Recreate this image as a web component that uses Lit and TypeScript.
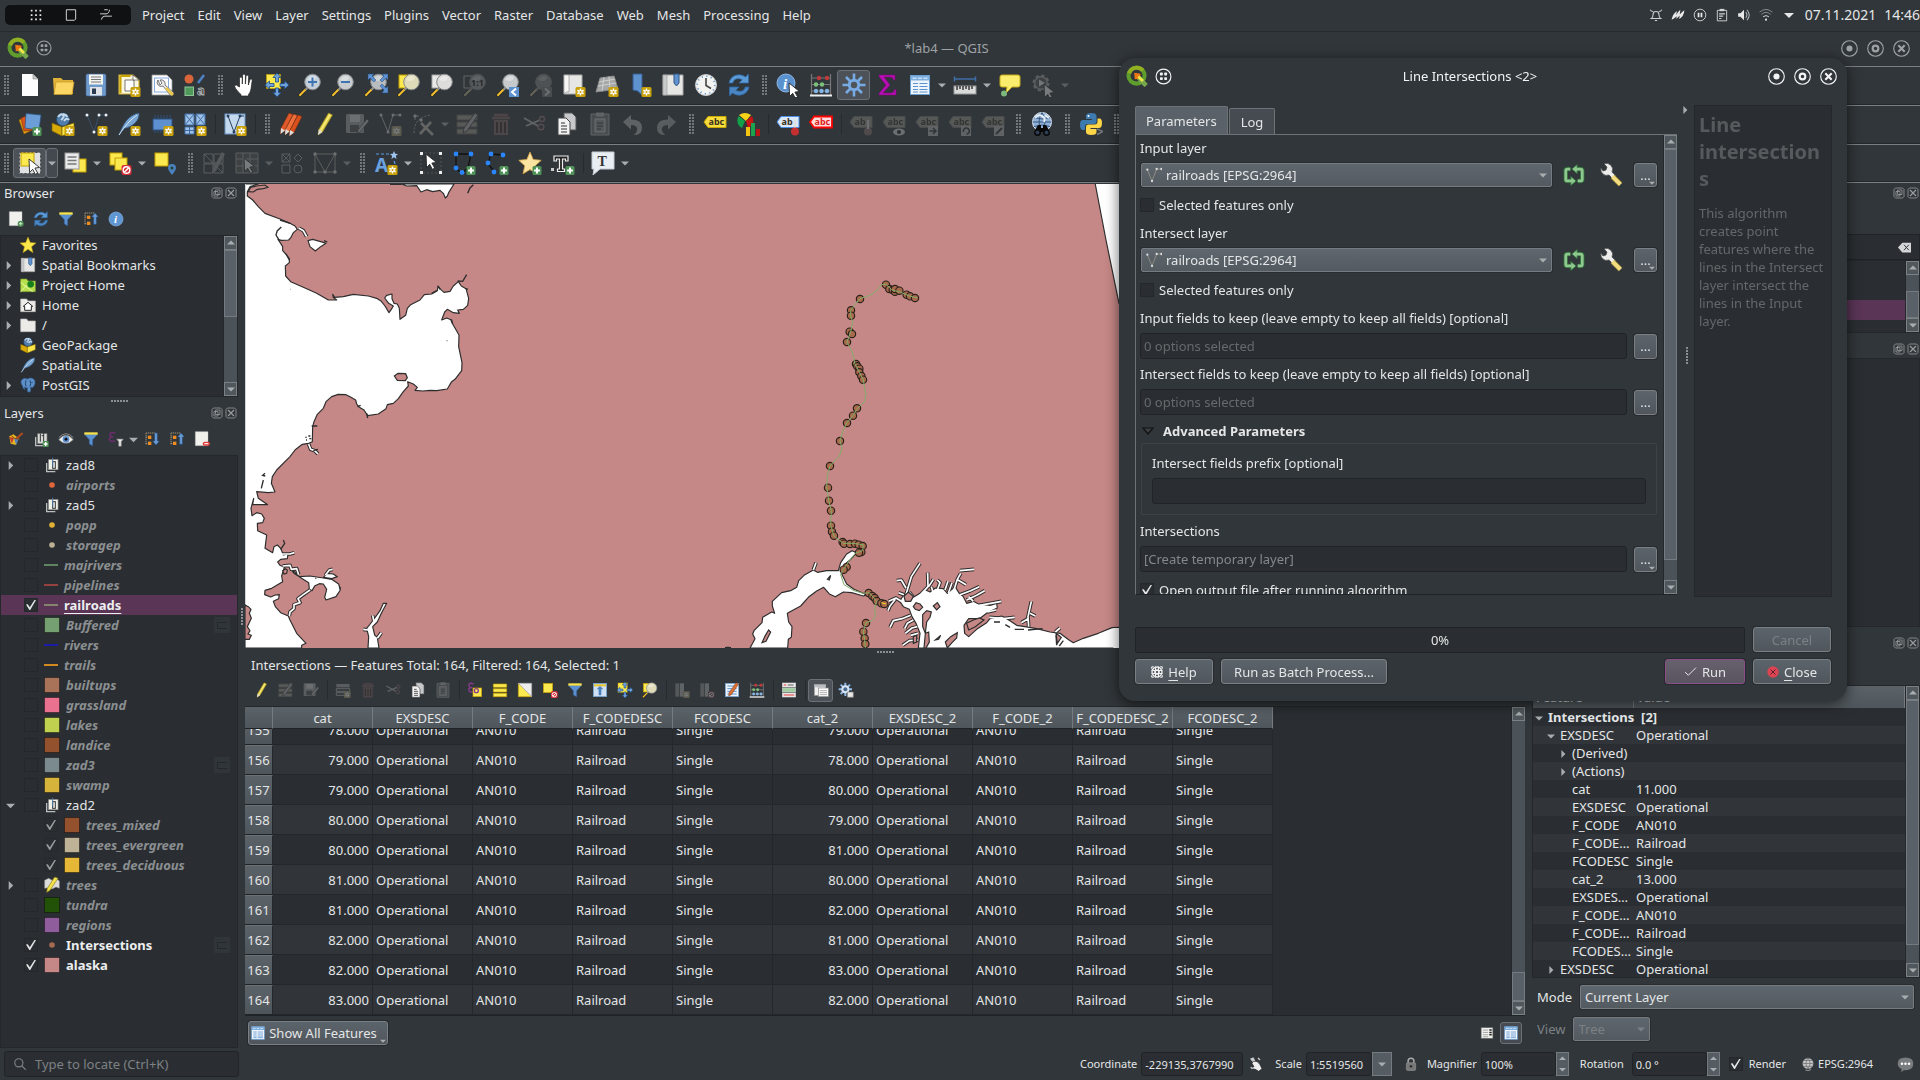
import { LitElement, html, svg, css, nothing } from "lit";
import { customElement } from "lit/decorators.js";
import { classMap } from "lit/directives/class-map.js";

/* ------------------------------------------------------------------ icons */

const star = svg`<rect x="13.500" y="14" width="10" height="10" rx="1.500" fill="#c8a008"/><path d="M18.500 15.500v7M15.400 17.200l6.200 3.600M21.600 17.200l-6.200 3.600" stroke="#fff" stroke-width="1.600"/><circle cx="18.500" cy="19" r="1" fill="#c8a008"/>`;
const plus = svg`<rect x="14.500" y="15" width="9" height="9" rx="1.500" fill="#4f9257"/><path d="M19 16.600v5.800M16.100 19.500h5.800" stroke="#fff" stroke-width="2"/>`;
const forbid = svg`<rect x="13.500" y="14" width="10" height="10" rx="2" fill="#d83038"/><circle cx="18.500" cy="19" r="3.300" fill="none" stroke="#fff" stroke-width="1.400"/><path d="M16.300 21.200l4.400-4.400" stroke="#fff" stroke-width="1.400"/>`;
const cursor = (x: number, y: number) => svg`<path transform="translate(${x} ${y})" d="M0 0l10.500 8.500-4.600.6 2.800 5-2.300 1.300-2.700-5.100L0.600 13.600z" fill="#fff" stroke="#222" stroke-width=".9"/>`;
const glass = (fill: string) => svg`<path d="M10 14L6.500 18" stroke="#8f9396" stroke-width="2.200"/><path d="M7.500 16.500L1 23.200" stroke="#1c1c1c" stroke-width="3"/><path d="M7.500 16.500L1.400 22.800" stroke="#f4c030" stroke-width="2"/><circle cx="14.500" cy="9" r="7.800" fill="${fill}" stroke="#85898c"/><path d="M9 7a6 6 0 0 1 9-3q-1 6-9 3z" fill="#fff" opacity=".35"/>`;
const tag = (fill: string, line: string, txt: string) => svg`<path d="M1 10L5 4.500h18v11H5z" fill="${fill}" stroke="${line}"/><text x="5.500" y="13.200" font-size="9" font-weight="700" font-family="Noto Sans" fill="#3a3020">${txt}</text>`;
const yellowSq = (x: number, y: number, s: number) => svg`<rect x="${x}" y="${y}" width="${s}" height="${s}" fill="#fce94f" stroke="#c4a000"/>`;
const pencil = svg`<path d="M16.500 1l4 2L10.500 20 6 23l.8-5.500z" fill="#e8d44a" stroke="#8d7c1c" stroke-width=".7"/><path d="M18 2.500L8.400 19" stroke="#fff6a0"/><path d="M6.800 17.500L6 23l4.500-3z" fill="#ddd"/>`;
const tableIco = svg`<rect x="2.500" y="2.500" width="19" height="19" fill="#eef4fa" stroke="#6a9fd4"/><rect x="3" y="3" width="18" height="4.500" fill="#7fb0e0"/><path d="M4.500 5.200h4M10 5.200h4M15.500 5.200h4" stroke="#e8f2fc"/><path d="M5 10.500h5M11.500 10.500h8M5 13.500h5M11.500 13.500h8M5 16.500h5M11.500 16.500h8M5 19h5M11.500 19h8" stroke="#5b93cf" stroke-width="1.200"/>`;
const page = svg`<path d="M2 1h19v21H2z" fill="#f0f0ec" stroke="#bbb" stroke-width=".6"/>`;
const refresh = svg`<path d="M2 10C3 3 12-1 18.500 4L21.500 1v9h-9.500l3.200-3.200C11 4.500 6.500 6 5.800 10z" fill="#5b9ad6" stroke="#2f67a3" stroke-width=".8"/><path d="M22 14c-1 7-10 11-16.500 6L2.500 23v-9H12l-3.200 3.200c4.200 2.300 8.700.8 9.400-3.200z" fill="#4a85c4" stroke="#2f67a3" stroke-width=".8"/>`;
const funnel = svg`<path d="M2 5h20l-7.500 8v9l-5-2.500V13z" fill="#5a8fd0" stroke="#33609a" stroke-width=".8"/><rect x="2" y="2" width="20" height="3.500" fill="#f8e34a"/>`;
const globeBox = svg`<circle cx="12" cy="7.500" r="6.500" fill="#4f7cab" stroke="#26486c" stroke-width=".7"/><path d="M7 5q3-4 5-2t-2 5M13 9q3-4 5-1M12 2q4 1 4 3" stroke="#c5d8ea" stroke-width="2" fill="none"/><path d="M1 11l10 4v9L1 19z" fill="#d8ab08" stroke="#7d6304" stroke-width=".7"/><path d="M23 11l-12 4v9l12-5z" fill="#fbe548" stroke="#7d6304" stroke-width=".7"/>`;
const feather = svg`<path d="M2 23C6 12 11 3 22 1c1 7-6 14-15 15.500z" fill="#79a5d3" stroke="#31537a" stroke-width=".8"/><path d="M2 23C8 14 13 8 20 3" stroke="#d8e7f5" fill="none"/>`;
const nodes = (c: string, d: string) => svg`<path d="M3 3L10 20 15 3h7" fill="none" stroke="${c}"/><circle cx="3" cy="3" r="1.500" fill="${d}"/><circle cx="10" cy="20" r="1.500" fill="${d}"/><circle cx="15" cy="3" r="1.500" fill="${d}"/><circle cx="22" cy="3" r="1.500" fill="${d}"/>`;
const abacus = svg`<path d="M2.500 1v21M21.500 1v21M2 5h20M2 11.500h20M2 18h20" stroke="#777" stroke-width="1.200"/><path d="M1 22.500h22" stroke="#eee" stroke-width="2"/><g fill="#c03a3a"><circle cx="10" cy="5" r="2.200"/><circle cx="18" cy="5" r="2.200"/></g><g fill="#7cc07c"><circle cx="7" cy="11.500" r="2.200"/><circle cx="13" cy="11.500" r="2.200"/></g><g fill="#84b4e4"><circle cx="7" cy="18" r="2.200"/><circle cx="12.500" cy="18" r="2.200"/><circle cx="18" cy="18" r="2.200"/></g>`;
const treeLines = svg`<path d="M3 3v18M3 3h14M3 9h4M3 19h4" stroke="#b0a080" stroke-width="1.300" fill="none" stroke-dasharray="2 1"/><rect x="6" y="7" width="5" height="5" fill="#f08c1e"/><rect x="6" y="16" width="5" height="5" fill="#f08c1e"/>`;
const copyI = svg`<path d="M9 1h8l4 4v13H9z" fill="#c6c8c9" stroke="#555"/><path d="M3 6h8l4 4v13H3z" fill="#f2f2f2" stroke="#444"/><path d="M6 11h4M6 14h6M6 17h6M6 20h6" stroke="#333" stroke-width="1.200"/>`;
const pasteI = svg`<path d="M3 2h18v21H3z" fill="#777" stroke="#bbb"/><path d="M8 .500h8v4H8z" fill="#bbb"/><path d="M7 7h10v13H7z" fill="#999" stroke="#ddd"/><path d="M9 11h6M9 14h6M9 17h4" stroke="#333"/>`;
const cutI = svg`<path d="M2 6l14 8M4 14L18 8" stroke="#bbb" stroke-width="1.800"/><circle cx="19" cy="15" r="2.800" fill="none" stroke="#c66" stroke-width="1.500"/><circle cx="20" cy="7" r="2.500" fill="none" stroke="#c66" stroke-width="1.500"/>`;
const bin = svg`<path d="M3 6h18M5 3h14" stroke="#c05050" stroke-width="2.500"/><path d="M5 8h14v15H5z" fill="#b85656"/><path d="M8 10v11M12 10v11M16 10v11" stroke="#300" stroke-width="1.300"/>`;
const editRows = svg`<path d="M1 3h20v5H1zM1 10h20v5H1zM1 17h20v5H1z" fill="#a59f6c" stroke="#6b673e"/><path d="M19 1l3 2-11 16-4 2 1-5z" fill="#bbb" stroke="#444"/>`;
const saveEdit = svg`<rect x="1" y="2" width="18" height="19" rx="1.500" fill="#aaa"/><rect x="5" y="3" width="10" height="7" fill="#ddd"/><rect x="5" y="13" width="9" height="7" fill="#555"/><path d="M22 7l2 2-9 11-3 1 1-3z" fill="#ccc" stroke="#333" stroke-width=".6"/>`;
const arrowsX = svg`<path d="M12 0l4 4.500h-2.500V9h-3V4.500H8zM12 24l4-4.500h-2.500V15h-3v4.500H8zM0 12l4.500-4v2.500H9v3H4.500V16zM24 12l-4.500-4v2.500H15v3h4.500V16z" fill="#6fa2dc" stroke="#1d4a80" stroke-width=".8"/>`;
const bar = (r: string, x: number) => svg`<rect x="${x}" y="2" width="6" height="20" fill="${r}"/>`;

const ICONS: Record<string, unknown> = {
  New: svg`<path d="M4 1h11l5 5v17H4z" fill="#fdfdfd"/><path d="M15 1v5h5z" fill="#c9cbcc" stroke="#777" stroke-width=".5"/>`,
  Open: svg`<path d="M2 5h8l2 2h10v14H3z" fill="#e0b238"/><path d="M5 9h18l-2 12.500H3z" fill="#fbd663" stroke="#c99a24" stroke-width=".7"/>`,
  Save: svg`<rect x="2" y="1" width="20" height="22" rx="1.500" fill="#6f9bcc" stroke="#3f6794" stroke-width=".6"/><rect x="5" y="1.500" width="14" height="10" fill="#f3f3f1"/><path d="M7 4h10M7 6.500h10M7 9h10" stroke="#777"/><rect x="6" y="14" width="12" height="8.500" fill="#e0e4e8"/><rect x="8" y="15.500" width="4" height="5.500" fill="#2c3c50"/>`,
  "New layout": svg`<path d="M2 2h14l6 5v14H2z" fill="#fbf6de" stroke="#d0b030" stroke-width="1.200"/><path d="M3.500 3v17M3.500 3h10" stroke="#c9a400" stroke-width="2"/><path d="M8 7h9v11H8z" fill="#fff" stroke="#555" stroke-width=".8"/><path d="M16 2l6 5h-6z" fill="#fff" stroke="#333" stroke-width=".6"/>${star}`,
  "Layout manager": svg`<path d="M2 2h15l5 5v15H2z" fill="#fdfdfd" stroke="#999" stroke-width=".8"/><rect x="4.500" y="5" width="14" height="14" fill="none" stroke="#88aadd"/><path d="M8 7a4 4 0 0 0 5 6l8 10 3-3-9-8a4 4 0 0 0-5-5l2 3-2 2z" fill="#ececec" stroke="#444" stroke-width=".7"/><path d="M16 15l7 7" stroke="#e8c64a" stroke-width="3"/>`,
  Styles: svg`<circle cx="6" cy="6" r="4.500" fill="#d9663a"/><path d="M15 10l6-8" stroke="#4f82c4" stroke-width="2.500"/><rect x="2" y="14" width="8.500" height="8.500" fill="#4f9a5b" stroke="#8fc498"/><text x="14" y="22" font-size="13" font-weight="700" font-family="Noto Sans" fill="#303030" stroke="#b8bcbe" stroke-width=".8">a</text>`,
  Pan: svg`<path d="M7.500 14V5.500q0-1.500 1.400-1.500t1.400 1.500V11L10.600 2.500Q10.700 1 12 1t1.400 1.500V11l.6-7.500q.1-1.300 1.300-1.300t1.300 1.400L16.400 12l1.400-5q.4-1.200 1.500-.9t.9 1.500L19 16q-.7 4-2.500 5.500v1.500H9v-1.500Q6 19 3.600 15.500q-1.600-2.500-.3-3.200t2.300.6z" fill="#fff" stroke="#222" stroke-width=".7"/>`,
  "Pan to selection": svg`<rect x="1.500" y="1.500" width="14" height="14" fill="#fce94f" stroke="#c4a000" stroke-dasharray="2 1"/>${arrowsX}`,
  "Zoom in": svg`${glass("#c4cfda")}<path d="M14.500 4.500v9M10 9h9" stroke="#3f74b4" stroke-width="2"/>`,
  "Zoom out": svg`${glass("#c8ccce")}<path d="M10 9h9" stroke="#3f74b4" stroke-width="2"/>`,
  "Zoom full": svg`${glass("#b9bcbe")}<path d="M4 1h6L8 3l4 4-2 2-4-4-2 2zM24 1h-6l2 2-4 4 2 2 4-4 2 2zM24 20v-7l-2 2-4-4-2 2 4 4-2 3z" fill="#5d90cf" stroke="#1d4a80" stroke-width=".5"/>`,
  "Zoom to selection": svg`<rect x="2" y="2" width="11" height="13" fill="#fce94f" stroke="#c4a000"/>${glass("#dfdbb8")}`,
  "Zoom to layer": svg`<rect x="2" y="2" width="11" height="13" fill="#e8e8e6" stroke="#aaa"/>${glass("#dddddb")}`,
  "Zoom native": svg`<rect x="1" y="3" width="12" height="12" fill="none" stroke="#bbb"/>${glass("#999")}<text x="8" y="12.500" font-size="9" font-weight="700" font-family="Noto Sans" fill="#111">1:1</text>`,
  "Zoom last": svg`${glass("#c6cacc")}<rect x="13" y="14" width="10" height="10" fill="#5d90cf"/><path d="M20 15.500L16 19l4 3.500" fill="none" stroke="#fff" stroke-width="2"/>`,
  "Zoom next": svg`${glass("#888")}<rect x="13" y="14" width="10" height="10" fill="#777"/><path d="M16 15.500l4 3.500-4 3.500" fill="none" stroke="#ddd" stroke-width="2"/>`,
  "New map view": svg`<path d="M2 2h18v19H2z" fill="#e6e6e4" stroke="#aaa"/><path d="M2 2h5v17q-3-1-5 2z" fill="#f7f7f5" stroke="#888" stroke-width=".6"/>${star}`,
  "New 3D view": svg`<path d="M5 5l14-2 4 13L1 19z" fill="#a5a7a8" stroke="#888"/><path d="M4 9l16-3M3 13l18-3M9 4L7 18M14 3.500l1 14" stroke="#d8d8d6" stroke-width=".8"/>${star}`,
  "New bookmark": svg`<path d="M5 1h9v21l-4.500-4L5 17z" fill="#5e93cf" stroke="#345f96"/>${star}`,
  Bookmarks: svg`<path d="M2 2h20v20H2z" fill="#e6e6e4" stroke="#aaa"/><path d="M2 2h4v20H2z" fill="#c9cacb" stroke="#999" stroke-width=".6"/><path d="M13 1h5v9l-2.500 3L13 10z" fill="#5e93cf" stroke="#2f5586"/>`,
  Temporal: svg`<circle cx="12" cy="12" r="10.500" fill="#f3f3f1" stroke="#c7c9ca"/><circle cx="12" cy="12" r="8.800" fill="none" stroke="#5e93cf" stroke-width="1.500" stroke-dasharray="1.200 3.400"/><path d="M12 5v7.500l5 3" fill="none" stroke="#444" stroke-width="1.600"/>`,
  Refresh: refresh,
  Identify: svg`<circle cx="10" cy="10" r="9" fill="#5a91cf" stroke="#8fb6e2"/><text x="7" y="15.500" font-size="15" font-weight="700" font-style="italic" font-family="Liberation Serif" fill="#fff">i</text>${cursor(13, 10)}`,
  Calculator: abacus,
  Toolbox: svg`<g stroke="#78aae4" stroke-width="2.600"><path d="M12 .500v23M.500 12h23M4 4l16 16M20 4L4 20"/></g><circle cx="12" cy="12" r="6.200" fill="#78aae4"/><circle cx="12" cy="12" r="3.200" fill="#4f5459"/>`,
  Statistics: svg`<path d="M4 2h16v5h-1.500Q18 4 15 4H9l6 8-7 8h8q3 0 3.500-3.500H21V22H4v-1.500L11 12 4 3.500z" fill="#b80fb4" stroke="#7d077a" stroke-width=".6"/>`,
  "Attribute table": tableIco,
  Measure: svg`<path d="M1 6h22M1.500 3.500v5M22.500 3.500v5" stroke="#3f6ea8" stroke-width="1.500"/><rect x="1" y="13" width="22" height="8" fill="#d9dbda" stroke="#999"/><path d="M4 13v4M7 13v3M10 13v4M13 13v3M16 13v4M19 13v3" stroke="#222" stroke-width="1.300"/>`,
  "Map tips": svg`<path d="M4 2h16q2 0 2 2v8q0 2-2 2h-6l-6 6 1-6H4q-2 0-2-2V4q0-2 2-2z" fill="#faec6c" stroke="#c8ad1c"/><circle cx="6" cy="20.500" r="3" fill="#7cb87c"/>`,
  "Run action": svg`<circle cx="10" cy="10" r="7" fill="#aaa" stroke="#aaa" stroke-width="3" stroke-dasharray="3 2.500"/><circle cx="10" cy="10" r="5.500" fill="#555"/><path d="M8 6.500l6 3.500-6 3.500z" fill="#eee"/>${cursor(13, 11)}`,

  "Data source": svg`<path d="M1 8l8-4 5 14-8 4z" fill="#e8a317" stroke="#8a5c00" stroke-width=".6"/><path d="M3 6l8-3 4 15-9 1z" fill="#d9541e" stroke="#7c2a08" stroke-width=".6"/><path d="M8 1.500L23 3l-2 15-14-2z" fill="#6b9ed6" stroke="#2a5384" stroke-width=".7"/>${plus}`,
  "New GeoPackage": svg`${globeBox}${star}`,
  "New shapefile": svg`${nodes("#39506a", "#e8f0f8")}${star}`,
  "New SpatiaLite": svg`${feather}${star}`,
  "New memory layer": svg`<path d="M5 3v18M8 3v18M11 3v18M14 3v18M17 3v18M20 3v18" stroke="#2f5180"/><rect x="3" y="7" width="19" height="11" fill="#5d90cf" stroke="#2f5180"/>${star}`,
  "New mesh": svg`<path d="M2 2h9v11H2zM13 2h9v11h-9zM2 15h9v7H2z" fill="#9fc2e8" stroke="#4472a8"/><path d="M2 2l9 11M11 2L2 13M13 2l9 11M22 2l-9 11M2 18.500h9M6.500 15v7" stroke="#3c6aa4"/>${star}`,
  "New virtual layer": svg`<rect x="2" y="2" width="20" height="20" fill="#c4d8ee" stroke="#6b94c4"/><path d="M5 4l6 16L17 4h4" fill="none" stroke="#26415f"/><circle cx="5" cy="4" r="1.500" fill="#26415f"/><circle cx="17" cy="4" r="1.500" fill="#26415f"/><circle cx="11" cy="20" r="1.500" fill="#26415f"/>${star}`,
  "Current edits": svg`<g stroke="#6e2c0c" stroke-width=".6"><path d="M10 1l4 1.500-8 16-4.500 3.500.5-6z" fill="#e0592a"/><path d="M14.500 2l4 1.500-8 16L6 23l.5-6z" fill="#ee6f3c"/><path d="M19 3l4 1.500-8 16L10.500 24l.5-6z" fill="#d9501f"/></g><path d="M2 16l-.5 6 4.500-3.500zM6.500 17L6 23l4.500-3.500zM11 18l-.5 6 4.500-3.500z" fill="#ddd"/>`,
  "Toggle editing": pencil,
  "Save edits": saveEdit,
  "Add feature": svg`${nodes("#bbb", "#ddd")}${star}`,
  "Vertex tool": svg`<path d="M3 21Q3 5 20 3" stroke="#bbb" fill="none" stroke-dasharray="2 1.500"/><path d="M4 4h4M4 4v4" stroke="#bbb"/><circle cx="4" cy="4" r="1.700" fill="#ddd"/><circle cx="10" cy="8" r="1.700" fill="#ddd"/><path d="M9 22L20 10M10 11l12 12" stroke="#c8c090" stroke-width="2.600" fill="none"/>`,
  "Modify attributes": editRows,
  "Delete selected": bin,
  Cut: cutI,
  Copy: copyI,
  Paste: pasteI,
  Undo: svg`<path d="M2 10l8-7v4.500q11 0 11 8T13 23q4-4 3-7t-6-3v4.500z" fill="#b8b8b8"/>`,
  Redo: svg`<path d="M22 10l-8-7v4.500q-11 0-11 8T11 23q-4-4-3-7t6-3v4.500z" fill="#9ab0a0"/>`,
  Labels: svg`${tag("#f6dc3c", "#c9a800", "abc")}`,
  Diagrams: svg`<path d="M10 9L3 3Q9-1 15 3z" fill="#f7d417"/><path d="M9 9L2.500 4Q-1 12 6 16z" fill="#12a048"/><path d="M10 9l6-5q4 8-4 12z" fill="#c81414"/><rect x="10" y="15" width="4" height="9" fill="#f3c311"/><rect x="15" y="11" width="4" height="13" fill="#1ca24e"/><rect x="20" y="17" width="4" height="7" fill="#b81414"/>`,
  "Highlight pinned": svg`${tag("#dbe8f8", "#4a8fe8", "ab")}<path d="M19 8v9" stroke="#ddd" stroke-width="2"/><circle cx="19" cy="19.500" r="4" fill="#c43030"/>`,
  "Show unplaced": svg`<path d="M1 10L5 4.500h18v11H5z" fill="#fdd" stroke="#f00" stroke-width="1.800"/><text x="5.500" y="13.200" font-size="9" font-weight="700" font-family="Noto Sans" fill="#e02020">abc</text>`,
  "Pin labels": svg`${tag("#a89c60", "#777", "ab")}<circle cx="19" cy="19.500" r="4" fill="#b66"/><path d="M19 8v9" stroke="#ddd" stroke-width="2"/>`,
  "Show labels": svg`${tag("#a89c60", "#777", "abc")}<ellipse cx="17" cy="20" rx="6" ry="3.500" fill="#ddd"/><circle cx="17" cy="20" r="2" fill="#222"/>`,
  "Move label": svg`${tag("#a89c60", "#777", "abc")}<rect x="13" y="14" width="10" height="10" fill="#bbb"/><path d="M14.500 19h6M18 16l3 3-3 3" stroke="#333" stroke-width="1.600" fill="none"/>`,
  "Rotate label": svg`${tag("#a89c60", "#777", "abc")}<rect x="13" y="14" width="10" height="10" fill="#bbb"/><path d="M15.500 20a3 3 0 1 1 3 2" stroke="#333" stroke-width="1.600" fill="none"/>`,
  "Change label": svg`${tag("#a89c60", "#777", "abc")}<rect x="13" y="14" width="10" height="10" fill="#bbb"/><path d="M15 22l6-6" stroke="#333" stroke-width="2"/>`,
  MetaSearch: svg`<circle cx="12" cy="10" r="9.500" fill="#8fb0d4" stroke="#dfe9f4"/><path d="M2.500 10h19M4 5.500q8 3 16 0M4 14.500q8-3 16 0M12 .500q-6 9.500 0 19M12 .500q6 9.500 0 19" stroke="#33567e" fill="none"/><path d="M5 6q3-4 7-2t2 6M15 3l4 3" stroke="#e6eef6" stroke-width="2" fill="none"/><path d="M8 13h3v3h2v-3h3l4 7q0 4-3.500 4T13 20h-2q0 4-3.500 4T4 20z" fill="#080808"/><circle cx="7.500" cy="20.500" r="2" fill="#2c3e52"/><circle cx="16.500" cy="20.500" r="2" fill="#2c3e52"/>`,
  Python: svg`<path d="M12 1q-5 0-5 3v3h6v1H4q-3 0-3 5t3 5h2v-3q0-3 3-3h6q2.500 0 2.500-2.500V4q0-3-5.500-3z" fill="#3d7ab0"/><path d="M12.500 23q5 0 5-3v-3h-6v-1H20q3 0 3-5t-3-4.500h-1.500v3q0 3-3 3h-6Q7 12.500 7 15v5q0 3 5.500 3z" fill="#fcd648"/><circle cx="9.500" cy="4" r="1" fill="#fff"/><path d="M18 17l6 2.500-6 3" fill="none" stroke="#777" stroke-width="1.500"/>`,

  "Select features": svg`<rect x="1.500" y="1.500" width="21" height="21" fill="#dfe1e2" stroke="#444" stroke-dasharray="2 2"/>${yellowSq(3, 2, 13)}${cursor(11, 8)}`,
  "Select by value": svg`${yellowSq(10, 8, 13)}<rect x="2" y="2" width="14" height="16" fill="#e9eaea" stroke="#999"/><path d="M4.500 6h9M4.500 9.500h9M4.500 13h9" stroke="#777" stroke-width="1.500"/>`,
  "Deselect all": svg`${yellowSq(2, 2, 12)}${yellowSq(7, 7, 12)}${forbid}`,
  "Select by location": svg`${yellowSq(2, 2, 13)}<path d="M19 24q-4-5-4-7a4 4 0 0 1 8 0q0 2-4 7z" fill="#4a80bd"/><circle cx="19" cy="17" r="1.500" fill="#243"/>`,
  "Mesh digitizing": svg`<path d="M2 3h9v9H2zM12 3h9v9h-9zM2 13h9v9H2zM12 13h9v9h-9zM2 3l19 19" fill="none" stroke="#aaa"/><path d="M20 1l3 2-9 17-4 2 1-5z" fill="#999"/>`,
  "Mesh select": svg`<path d="M1 2h22v20H1zM1 8h22M1 15h22M8 2v20M15 2v20" fill="#5c5940" stroke="#aaa"/>${cursor(9, 7)}`,
  "Mesh transform": svg`<path d="M2 3h8v8H2zM2 3l8 8M10 3l-8 8M14 7l4-4 4 4-4 4zM2 14h8v8H2z" fill="none" stroke="#aaa"/><circle cx="18" cy="18" r="4" fill="none" stroke="#aaa"/>`,
  "Mesh edges": svg`<path d="M2 3h20v18H2zM2 3l10 18L22 3" fill="none" stroke="#b5ad70"/><g fill="#ddd"><circle cx="2" cy="3" r="1.700"/><circle cx="22" cy="3" r="1.700"/><circle cx="2" cy="21" r="1.700"/><circle cx="22" cy="21" r="1.700"/><circle cx="12" cy="21" r="1.700"/></g>`,
  "Annotation layer": svg`<path d="M2 3h13M20 10q2 4 0 8" fill="none" stroke="#5a9be8" stroke-width="1.200" stroke-dasharray="3 2"/><text x="1" y="21" font-size="19" font-weight="700" font-family="Noto Sans" fill="#6aa2e0">A</text><path d="M20 0l1.200 2.800 2.800.2-2.200 1.900.8 3L20 6.300 17.400 8l.8-3L16 3l2.800-.2z" fill="#9ec4f4"/>${star}`,
  "Modify annotations": svg`<path d="M2 2h20v20H2z" fill="none" stroke="#555" stroke-dasharray="2 2"/><g fill="#eee"><path d="M1 1h3v3H1zM20 1h3v3h-3zM1 20h3v3H1zM20 20h3v3h-3z"/></g>${cursor(7, 3)}`,
  "Polygon annotation": svg`<path d="M4 3h15l-3 14-6 5-6-4z" fill="none" stroke="#111" stroke-width="1.300"/><g fill="#2a86ff"><circle cx="4" cy="3" r="2.400"/><circle cx="19" cy="3" r="2.400"/><circle cx="4" cy="17" r="2.400"/><circle cx="10" cy="21.500" r="2.400"/></g>${plus}`,
  "Line annotation": svg`<path d="M18 4L6 3 3 13l7 8" fill="none" stroke="#111" stroke-width="1.300"/><g fill="#2a86ff"><circle cx="18" cy="4" r="2.400"/><circle cx="6" cy="3" r="2.400"/><circle cx="3" cy="12" r="2.400"/><circle cx="9" cy="21" r="2.400"/></g>${plus}`,
  "Marker annotation": svg`<path d="M12 1l3.200 7.500 8 .8-6 5.500 1.800 8-7-4.200-7 4.200 1.800-8-6-5.500 8-.8z" fill="#fbe3a0" stroke="#d4a648" stroke-width=".8"/>${plus}`,
  "Text annotation": svg`<path d="M3 5h14v5h-2.500V8H11.500v10h2v2.500h-7V18h2V8H5.500v2H3z" fill="#222" stroke="#eee" stroke-width="1.200"/><rect x="0" y="17" width="3" height="3" fill="#ccc"/>${plus}`,
  "Text balloon": svg`<path d="M1 1h22v17H9l-7 6 1-6H1z" fill="#e9eef3" stroke="#c4ccd4"/><text x="6.500" y="14.500" font-size="14" font-weight="700" font-family="Liberation Serif" fill="#333">T</text>`,

  "Add layer": svg`${page}<circle cx="19" cy="19" r="4.500" fill="#4f9257"/><path d="M19 16.500v5M16.500 19h5" stroke="#cfe8cf" stroke-width="1.500"/>`,
  Filter: funnel,
  "Collapse all": svg`${treeLines}<path d="M18 3l5 6h-3v11h-4V9h-3z" fill="#6a9dd8" stroke="#244f84" stroke-width=".8"/>`,
  "Expand all": svg`${treeLines}<path d="M18 21l5-6h-3V3h-4v12h-3z" fill="#6a9dd8" stroke="#244f84" stroke-width=".8"/>`,
  Properties: svg`<circle cx="12" cy="12" r="10.500" fill="#5f96d4" stroke="#86b0e0"/><text x="9" y="18" font-size="17" font-weight="700" font-style="italic" font-family="Liberation Serif" fill="#fff">i</text>`,
  "Layer styling": svg`<path d="M2 8l6-3 8 6-4 10-8-2z" fill="#e8b820"/><path d="M2 9l4 10 3-9z" fill="#c8402c"/><path d="M9 10l3 11 4-9z" fill="#4a80c0"/><path d="M12 12L22 3" stroke="#b04a20" stroke-width="3"/><path d="M5 7l5 4 8 1" stroke="#8d4a10" stroke-width="1.500" fill="none"/>`,
  Group: svg`<path d="M4 9v13h13" fill="none" stroke="#bcbfc0" stroke-width="2"/><rect x="7" y="4" width="14" height="15" fill="#f0efe8" stroke="#999"/><rect x="13" y="7" width="4" height="10" fill="none" stroke="#333" stroke-width="1.500"/><path d="M13 1v13" stroke="#4a78a8" stroke-width="1.500"/>`,
  "Add group": svg`<path d="M4 9v13h13" fill="none" stroke="#bcbfc0" stroke-width="2"/><rect x="7" y="4" width="14" height="15" fill="#d8dad8" stroke="#777"/><path d="M11 4v12M16 1v15M13 7h3" stroke="#333" stroke-width="1.500"/>${plus}`,
  Visibility: svg`<path d="M1 13q11-13 22 0q-11 11-22 0z" fill="#f0f0ee" stroke="#666"/><path d="M1 10q11-12 22 0" fill="none" stroke="#888" stroke-width="1.500"/><circle cx="12" cy="12.500" r="5" fill="#5b8fd0"/><circle cx="12" cy="12.500" r="2.200" fill="#111"/>`,
  Expression: svg`<path d="M11 3Q3 1 3 5t5 4Q1 9 2 13t9 2" fill="none" stroke="#6d2e70" stroke-width="2.200"/><path d="M13 12h10l-3 4v7h-4v-7z" fill="#e5e5e3" stroke="#777"/>`,
  "Remove layer": svg`${page}<rect x="13" y="16" width="11" height="6" rx="3" fill="#e23c3c"/><path d="M15.500 19h6" stroke="#fff" stroke-width="1.600"/>`,
  Favorites: svg`<path d="M12 0l3.400 8.300 8.600.6-6.700 5.700 2.200 8.900L12 18.500l-7.500 5 2.200-8.900L0 8.900l8.600-.6z" fill="#fbe84a" stroke="#b89a10" stroke-width=".8"/>`,
  "Project Home": svg`<path d="M1 3h9l2 3h11v16H1z" fill="#b8e04c" stroke="#7a9a2c"/><path d="M1 22L14 9M1 8l10 8 8 6" stroke="#e8f8b0" stroke-width="1.500" fill="none"/><circle cx="16" cy="11" r="5" fill="#17801c"/>`,
  Home: svg`<path d="M1 3h9l2 3h11v16H1z" fill="#ecebe8" stroke="#bbb"/><path d="M5 14l7-6 7 6h-2v6H7v-6z" fill="#fff" stroke="#222" stroke-width="1.500"/>`,
  Folder: svg`<path d="M1 3h9l2 3h11v16H1z" fill="#ecebe8" stroke="#bbb"/>`,
  GeoPackage: globeBox,
  SpatiaLite: feather,
  PostGIS: svg`<path d="M2 5Q6 0 11 3q7-4 11 2 2 5-2 10-2 2-4 0v6q-3 4-5 0v-5q-2 1-4-1v4q-3-1-3-5Q0 8 2 5z" fill="#5d8fc8" stroke="#2f5a90"/><path d="M9 5q-2 6 0 9M15 5q2 5 0 9M17 8h2" stroke="#24486f" stroke-width="1.500" fill="none"/>`,
  Trees: svg`<path d="M1 5l6-3 5 3 6-3 5 4v11l-5-2-6 3-6-2-5 1z" fill="#dcdcda" stroke="#999" stroke-width=".6"/><path d="M16 0l5 2L9 20l-5 3 1-6z" fill="#f0e04a" stroke="#8d7c1c"/>`,

  "Conditional select": svg`<path d="M10 3Q2 0 3 5t5 3Q1 9 3 13t6 1" fill="none" stroke="#8a3a90" stroke-width="2"/>${yellowSq(9, 9, 13)}<circle cx="14" cy="13" r="3" fill="none" stroke="#8a3a90" stroke-width="2"/>`,
  "Select all": svg`<path d="M2 3h20v5H2zM2 10h20v5H2zM2 17h20v5H2z" fill="#fce94f" stroke="#c4a000"/>`,
  Invert: svg`<path d="M2 2v20h20z" fill="#fce94f" stroke="#c4a000"/><path d="M2 2h20v20z" fill="#ececec" stroke="#aaa"/>`,
  Deselect: svg`${yellowSq(2, 2, 14)}${forbid}`,
  "Move to top": svg`<rect x="2" y="2" width="20" height="20" fill="#cfe0f2" stroke="#6a9fd4"/><path d="M3 5h18" stroke="#e8c62c" stroke-width="3"/><path d="M12 6l5 5h-3v9h-4v-9H7z" fill="#4a80c0"/>`,
  "New row": svg`<path d="M2 3h20v5H2z" fill="#aaa"/><path d="M2 10h20v4H2zM2 16h12v4H2z" fill="none" stroke="#bbb" stroke-width="1.500"/>${star}`,
  "New field": svg`${bar("#999", 2)}${bar("#bbb", 9)}${star}`,
  "Delete field": svg`${bar("#999", 2)}${bar("#bbb", 9)}${forbid}`,
  "Organize columns": svg`<rect x="2" y="2" width="20" height="20" fill="#eef4fa" stroke="#6a9fd4"/><path d="M5 6h14M5 10h14M5 14h14M5 18h14" stroke="#5b93cf" stroke-width="1.500"/><path d="M18 1l4 2L11 19l-4 2 .6-5z" fill="#d96f34" stroke="#7c3710" stroke-width=".7"/>`,
  "Conditional formatting": svg`<g stroke="#ccc" fill="#f4f4f2"><rect x="2" y="1.500" width="20" height="6"/><rect x="2" y="9" width="20" height="6" fill="#9fd09f"/><rect x="2" y="16.500" width="20" height="6"/></g><path d="M4 4.500h4M4 19.500h16" stroke="#d33" stroke-width="1.500"/><path d="M10 4.500h9" stroke="#555" stroke-width="1.500"/>`,
  Dock: svg`<rect x="2" y="4" width="17" height="16" fill="#f0f0ee" stroke="#999"/><rect x="2" y="4" width="17" height="4" fill="#b8bcc0"/><rect x="8" y="9" width="15" height="13" fill="#fff" stroke="#888"/><path d="M10 13h11M10 16h11M10 19h11" stroke="#888"/>`,
  Actions: svg`<g stroke="#8fb8e8" stroke-width="3"><path d="M11 1v20M1 11h20M4 4l14 14M18 4L4 18"/></g><circle cx="11" cy="11" r="6" fill="#d8e6f6"/><circle cx="11" cy="11" r="3" fill="#4a6a90"/><path d="M14 15h9v8h-9z" fill="#e8e8e6" stroke="#777"/>`,
  "Form view": svg`<rect x="2" y="3" width="20" height="18" fill="#f2f2f0" stroke="#777"/><path d="M5 7h9M5 11h9M5 15h9M5 18.500h9" stroke="#999" stroke-width="1.500"/><path d="M16 7h4M16 11h4M16 15h4" stroke="#222" stroke-width="2.500"/>`,
  Sync: svg`<path d="M8 5.500H5q-2 0-2 2v9q0 2 2 2h5M16 18.500h3q2 0 2-2v-9q0-2-2-2h-5" fill="none" stroke="#2f6a38" stroke-width="5"/><path d="M15.500 .500L9.500 5.500l6 5zM8.500 23.500l6-5-6-5z" fill="#8fc88f" stroke="#2f6a38"/><path d="M8 5.500H5q-2 0-2 2v9q0 2 2 2h5M16 18.500h3q2 0 2-2v-9q0-2-2-2h-5" fill="none" stroke="#8fc88f" stroke-width="3"/>`,
  Wrench: svg`<path d="M2 5a6 6 0 0 0 8 7l4 4 3-3-4-4A6 6 0 0 0 5 1l3 3-1 3-3 1z" fill="#ececea" stroke="#444" stroke-width=".7"/><path d="M13.500 13.500l8 8" stroke="#f2dc80" stroke-width="5"/><path d="M12 15l8 8M15 12l8 8" stroke="#a08830" stroke-width=".7"/>`,
  Lines: svg`<path d="M2 4l7 17L16 3h7" fill="none" stroke="#a8a090"/><g fill="#ddd"><circle cx="2" cy="4" r="1.700"/><circle cx="9" cy="21" r="1.700"/><circle cx="16" cy="3" r="1.700"/><circle cx="23" cy="3" r="1.700"/></g>`,
  HelpRing: svg`<g fill="none" stroke="#f0f0f0"><circle cx="12" cy="12" r="10" stroke-width="2.600"/><circle cx="12" cy="12" r="4.500" stroke-width="2.400"/><path d="M9 1v22M15 1v22M1 9h22M1 15h22" stroke-width="2"/><path d="M1.500 1.500h4M1.500 1.500v4M22.500 1.500h-4M22.500 1.500v4M1.500 22.500h4M1.500 22.500v-4M22.500 22.500h-4M22.500 22.500v-4" stroke-width="2.400"/></g>`,
  Tick: svg`<path d="M2 13l6 6L22 5" fill="none" stroke="#e8e8e8" stroke-width="1.800"/>`,
  Cross: svg`<circle cx="12" cy="12" r="11.500" fill="#da4453"/><path d="M7 7l10 10M17 7L7 17" stroke="#5c2028" stroke-width="2"/>`,
  Search: svg`<circle cx="10" cy="10" r="7" fill="none" stroke="#7d8184" stroke-width="2"/><path d="M15 15l7 7" stroke="#7d8184" stroke-width="2"/>`,
  Extents: svg`<path d="M3 4l5-2 3 5-4 2z" fill="#ccc"/><path d="M8 8q6-2 10 5l3 6-5 4-5-3-5-1q-1-2 3-3l-3-5z" fill="#eee" stroke="#222"/><path d="M15 3l3 3M4 17l3 2" stroke="#ccc" stroke-width="2"/>`,
  Lock: svg`<path d="M7 11V7q0-5 5-5t5 5v4" fill="none" stroke="#aaa" stroke-width="2.500"/><rect x="4" y="10" width="16" height="13" rx="2" fill="#777" stroke="#999"/><circle cx="12" cy="16" r="2" fill="#222"/>`,
  Globe: svg`<circle cx="12" cy="11" r="9" fill="#c9cbcc" stroke="#888"/><path d="M3 11h18M5 6h14M5 16h14M12 2q-7 9 0 18M12 2q7 9 0 18" stroke="#555" fill="none"/><path d="M8 22q4 3 9-1" stroke="#888" stroke-width="2" fill="none"/>`,
  Messages: svg`<path d="M12 2q11 0 11 9t-11 9q-1 0-2-.3L6 23l.500-4.500Q1 16 1 11 1 2 12 2z" fill="#787c7f"/><g fill="#fff"><circle cx="7" cy="11" r="1.800"/><circle cx="12" cy="11" r="1.800"/><circle cx="17" cy="11" r="1.800"/></g>`,
  Clear: svg`<path d="M8 3h16v18H8L0 12z" fill="#d4d6d7"/><path d="M11 7l9 10M20 7l-9 10" stroke="#33383c" stroke-width="1.800"/>`,
  Float: svg`<g fill="none" stroke="#9a9d9f" stroke-width="1.600"><path d="M2 5l3-3h14l3 3v14l-3 3H5l-3-3z"/><path d="M9 6h9v9H9z"/><path d="M6 9h8v9H6z"/></g>`,
  Shut: svg`<g fill="none" stroke="#9a9d9f" stroke-width="1.600"><path d="M2 5l3-3h14l3 3v14l-3 3H5l-3-3z"/><path d="M6 6l12 12M18 6L6 18" stroke-width="2.400"/></g>`,
  Logo: svg`<circle cx="11.500" cy="11.500" r="8.800" fill="none" stroke="#5f9d2c" stroke-width="4.400"/><path d="M3.500 9a8.800 8.800 0 0 1 15-3" fill="none" stroke="#93b023" stroke-width="4.400"/><path d="M13 13l9 9.500" stroke="#77a84c" stroke-width="5"/><path d="M9 8.500l7 1-1.500 5.500-5 .5z" fill="#ee7913"/><path d="M13.500 12.500l5 5" stroke="#f0e64a" stroke-width="3"/>`,
  Dots: svg`<circle cx="12" cy="12" r="10.500" fill="none" stroke="currentColor" stroke-width="1.600"/><g fill="currentColor"><rect x="7" y="6.500" width="4" height="4" rx="1"/><rect x="13" y="6.500" width="4" height="4" rx="1"/><rect x="7" y="13" width="4" height="4" rx="1"/><rect x="13" y="13" width="4" height="4" rx="1"/></g>`,
  Minimize: svg`<circle cx="12" cy="12" r="11" fill="none" stroke="currentColor" stroke-width="1.600"/><circle cx="12" cy="12" r="4.300" fill="currentColor"/>`,
  Maximize: svg`<circle cx="12" cy="12" r="11" fill="none" stroke="currentColor" stroke-width="1.600"/><circle cx="12" cy="12" r="4" fill="none" stroke="currentColor" stroke-width="3"/>`,
  CloseWin: svg`<circle cx="12" cy="12" r="11" fill="none" stroke="currentColor" stroke-width="1.600"/><path d="M7.500 7.500l9 9M16.500 7.500l-9 9" stroke="currentColor" stroke-width="3"/>`,
  Bell: svg`<path d="M4 18q3-2 3-7 0-5 5-5t5 5q0 5 3 7zM2 3q2 3 5 3M22 3q-2 3-5 3M10 21.500h4" fill="none" stroke="#d0d2d3" stroke-width="1.800"/>`,
  Feathers: svg`<path d="M1 20q2-10 9-15l-1 7q3-6 7-9l-1 8q3-4 8-7-1 11-9 15l1-6-6 6 1-5-5 4z" fill="#e8e8e8"/>`,
  Pause: svg`<circle cx="12" cy="12" r="10" fill="none" stroke="#d0d2d3" stroke-width="1.600"/><path d="M9.500 8v8M14.500 8v8" stroke="#e8e8e8" stroke-width="3"/>`,
  Clipboard: svg`<path d="M4 4h16v18H4z" fill="none" stroke="#d0d2d3" stroke-width="1.600"/><path d="M8 1.500h8v4H8z" fill="#d0d2d3"/><path d="M7 10h10M7 14h7M7 18h4" stroke="#d0d2d3" stroke-width="2"/>`,
  Volume: svg`<path d="M2 9h4l6-6v18l-6-6H2z" fill="#e8e8e8"/><path d="M15 7q4 5 0 10M17 3q8 9 0 18" fill="none" stroke="#b0b2b4" stroke-width="1.800"/>`,
  Wifi: svg`<circle cx="12" cy="20" r="1.800" fill="#e8e8e8"/><path d="M7 15q5-4 10 0" fill="none" stroke="#d0d2d3" stroke-width="1.700"/><path d="M4 11q8-7 16 0M1 7q11-9 22 0" fill="none" stroke="#85898c" stroke-width="1.700"/>`,
  Apps: svg`<g fill="#e8e8e8"><path d="M3 3h3v3H3zM10.500 3h3v3h-3zM18 3h3v3h-3zM3 10.500h3v3H3zM10.500 10.500h3v3h-3zM18 10.500h3v3h-3zM3 18h3v3H3zM10.500 18h3v3h-3zM18 18h3v3h-3z"/></g>`,
  Desktop: svg`<path d="M4 3h16v16l-2 2H4z" fill="none" stroke="#d0d2d3" stroke-width="1.700"/>`,
  Tiling: svg`<path d="M2 10h10q5 0 6-7M9 3h6M4 20q1-6 6-6h12" fill="none" stroke="#d0d2d3" stroke-width="1.700"/>`,
};

const icon = (name: string, size = 24) =>
  html`<svg class="ico" width=${size} height=${size} viewBox="0 0 24 24" aria-hidden="true">${ICONS[name]}</svg>`;

const triangle = (dir: "down" | "right" | "up") =>
  html`<svg class="tri" width="10" height="10" viewBox="0 0 10 10" aria-hidden="true"><path d=${dir === "down" ? "M0 3h10L5 8z" : dir === "up" ? "M0 7h10L5 2z" : "M3 0v10l5-5z"} /></svg>`;

/* -------------------------------------------------------- shared fragments */

/** Toolbar entries: "H" handle, "|" separator, prefix "~" disabled, "*" checked, suffix ">" drop-down. */
const toolbar = (items: string[], size: number) =>
  items.map((raw) => {
    if (raw === "H") return html`<span class="handle"></span>`;
    if (raw === "|") return html`<span class="sep"></span>`;
    const off = raw.startsWith("~");
    const on = raw.startsWith("*");
    const menu = raw.endsWith(">");
    const name = raw.replace(/^[~*]|>$/g, "");
    return html`<button class=${classMap({ tool: true, off, on })} ?disabled=${off} aria-label=${name}>${icon(name, size)}</button>${menu
      ? html`<button class=${classMap({ drop: true, off, boxed: on })} ?disabled=${off} aria-label=${name + " menu"}>${triangle("down")}</button>`
      : nothing}`;
  });

const scrollbar = (before: number, thumb: number, after: number) => html`<div class="scroll">
  <span class="sb">${triangle("up")}</span>
  <span style="flex:${before}"></span><span class="thumb" style="flex:${thumb}"></span><span style="flex:${after}"></span>
  <span class="sb">${triangle("down")}</span>
</div>`;

const dockTitle = (text: string) => html`<div class="docktitle"><span>${text}</span><button class="mini" aria-label="Float">${icon("Float", 12)}</button><button class="mini" aria-label="Hide">${icon("Shut", 12)}</button></div>`;

const shared = css`
  * { box-sizing: border-box; }
  :host { font: 13px/18px "Noto Sans", "Open Sans", sans-serif; color: #e4e6e7; }
  button, input, select { font: inherit; color: inherit; margin: 0; }
  button { background: none; border: 0; padding: 0; display: inline-flex; align-items: center; justify-content: center; }
  svg { display: block; flex: none; }
  .tri { fill: #a9adaf; }
  .scroll { display: flex; flex-direction: column; flex: none; width: 14px; background: #4c5358; border-left: 1px solid #24282b; }
  .sb { height: 14px; display: flex; align-items: center; justify-content: center; background: #51585d; border: 1px solid #7b8184; flex: none; }
  .sb .tri { width: 8px; height: 8px; }
  .thumb { background: #596068; border: 1px solid #757b80; }
  .field { height: 26px; min-width: 0; background: #2a2e32; border: 1px solid #202427; border-radius: 3px; padding: 0 3px; outline: none; }
  .field::placeholder { color: #84888b; opacity: 1; }
  .push { height: 25px; border: 1px solid #7a8085; border-radius: 3px; background: linear-gradient(#5c646b, #50565c); box-shadow: 0 0 0 1px #272b2e; gap: 5px; }
  .push:disabled { color: #7c8185; }
  .combo { display: grid; min-width: 0; align-items: center; }
  .combo > * { grid-area: 1 / 1; }
  .combo select { appearance: none; width: 100%; height: 24px; border: 1px solid #757b80; border-radius: 2px; background: linear-gradient(#5f676e, #535a60); padding: 0 22px 0 4px; box-shadow: 0 0 0 1px #292d30; outline: none; }
  .combo .tri { justify-self: end; margin-right: 5px; pointer-events: none; width: 8px; height: 8px; }
  .combo .lead { margin-left: 5px; pointer-events: none; }
  .combo.iconed select { padding-left: 24px; }
  .combo select:disabled { color: #7c8185; opacity: 1; }
  .combo select:disabled ~ .tri { fill: #7c8185; }
  .check { appearance: none; width: 14px; height: 14px; background: #2a2e32; border: 1px solid #24282b; flex: none; display: grid; place-items: center; }
  .check:checked::after { content: ""; width: 10px; height: 10px; background: #e4e6e7; clip-path: polygon(0 45%, 18% 42%, 38% 72%, 85% 0, 100% 0, 42% 100%, 34% 100%); }
`;

/* -------------------------------------------------------------------- map */

// Coastlines are digitised at three units per screen pixel.
const WEST = "M15 12H55L30 20 22 35V48L38 60 55 80 75 100 120 117 150 130 165 138 172 148 160 158 153 172 146 180 124 181 114 178 122 190 128 200 128 212 140 225 148 236V248L136 258 137 288 152 305 190 322 230 340 265 360 290 360 280 352 278 343 284 352 310 350 340 343 385 348 410 355 424 364 435 378 447 398 454 388 460 378 446 370 434 354 440 346 456 342 456 356 462 370 472 372 478 385 480 418 497 406 502 385 512 374 540 360 553 344 575 342 592 332 594 318 602 328 612 337 630 334 640 318 655 305 664 318 678 326 686 355 683 376 670 388 653 390 658 400 640 398 622 388 614 396 605 420 620 414 635 420 638 432 657 465 656 500 666 548 665 572 645 598 635 605 622 627 590 632 570 631 548 633 525 631 532 622 520 612 503 605 505 618 490 635 475 656 460 670 442 674 438 686 415 702 383 707 372 690 358 682 350 672 347 660 330 650 318 644 295 643 275 650 258 665 250 685 232 703 222 725 218 740 217 785 206 790 187 793 165 810 150 830 110 870 97 890 94 910 105 936 85 938 50 935 55 955 83 974 38 974 41 955 33 985 36 1007 50 998 65 1002 73 1015 68 1028 52 1030 53 1052 80 1065 75 1105 98 1118 102 1100 112 1095 122 1105 130 1125 144 1122 142 1136 122 1138 113 1146 120 1156 133 1162 128 1178 125 1188 128 1205 95 1225 75 1231 74 1244 92 1251 106 1245 118 1244 116 1256 100 1264 106 1280 122 1298 145 1308 150 1320 170 1360 198 1390 185 1396V1404H15Z";
const WEST_LAND = "M15 1275L25 1280 33 1288 28 1300 34 1315 22 1340 30 1352 24 1362 34 1366 28 1378H15ZM463 588L474 580 497 581 502 593 496 602 472 601ZM25 35L32 22 50 18 75 15 84 22 70 26 52 28 40 36ZM128 1172L136 1166 142 1170 140 1180 132 1182Z";
const WEST_WATER = "M485 12L500 18 530 17 543 36 560 29 578 35 600 31 610 40 616 54 622 48 626 38 642 12ZM204 182L218 178 250 187 258 190 242 200 226 213 210 200ZM150 1162L162 1180 178 1190 210 1188 250 1194 275 1198 296 1212 301 1230 288 1250 258 1260 254 1252 260 1228 250 1212 238 1211 225 1217 216 1232 208 1228 206 1208 180 1192ZM250 1192L262 1180 280 1182 292 1190 276 1196ZM384 1404L386 1370 380 1345 400 1320 420 1292 430 1270 440 1270 424 1300 412 1326 398 1340 404 1365 412 1372 417 1404Z";
const WEST_ARMS = "M210 1230L190 1244 174 1256 180 1268 162 1274 162 1286 150 1296 148 1308M128 1158L150 1156 154 1168 170 1166 176 1184M125 1122L150 1122 163 1118M256 1186L268 1170 278 1168M176 144L190 152 200 170M206 792L212 808 224 812 234 822M384 1350L370 1348M402 1325L398 1306M412 1375L424 1358";
const WEST_MARKS = "M116 178L108 165 112 152 124 141M683 40L690 24 700 14M120 120L150 130M138 222L148 240M215 738H232M75 880L68 886 76 888M70 900L64 925M196 772h4M205 768h6M198 780h3M208 776h6M252 182L262 186M653 303L668 304 680 284M678 326L684 328M150 328h1M620 482h2M600 328L594 318M575 340L590 332M380 700L383 714M352 680L362 676M122 1108L134 1090 130 1080M300 1228V1220M450 13H485M1455 1403h18M220 812L234 808M632 418L638 432M226 1195h3";
const GULF = "M150 1224L158 1210 165 1196 158 1182 162 1172 186 1148 188 1132 215 1116 224 1120 217 1098 217 1084 245 1058 272 1052 290 1042 296 1022 312 1006 340 990 352 997 380 992 415 992 422 968 440 942 456 932 470 938 452 958 436 972 424 1000 440 1032 462 1048 500 1064 490 1068 455 1058 430 1056 406 1070 388 1062 371 1042 350 1053 325 1072 302 1098 262 1120 266 1146 276 1160 274 1192 265 1198 263 1224ZM655 1224L660 1180 648 1150 636 1130 628 1108 610 1100 600 1085 604 1075 616 1060 640 1072 660 1060 672 1048 690 1056 706 1044 730 1046 742 1060 765 1040 778 1060 790 1070 800 1090 820 1084 836 1092 870 1096 890 1090 892 1104 862 1118 838 1136 806 1136 792 1156 794 1180 806 1190 830 1168 860 1148 870 1136 905 1128 930 1142 950 1156 975 1160 1010 1166 1050 1176 1080 1180 1107 1200 1120 1208 1150 1195 1195 1180 1236 1163 1257 1162V1224Z";
const GULF_ARMS = "M612 1085L622 1050 634 1010 660 970M618 1044L604 1020 590 1022M660 1066L684 1040 683 998M686 1040L700 1018M712 1050L720 1028 712 1020M735 1050L744 1024M762 1050L772 1018 782 1000M780 992L822 988M774 1020L798 1034M780 1064L812 1052 838 1040M800 1080L830 1066 854 1052M838 1096L872 1090 904 1084M862 1116L888 1110M604 1084L588 1074 566 1084M586 1078L570 1098 564 1112M632 1126L606 1136 580 1142 570 1162M640 1140L622 1150 614 1166M652 1160L636 1164 616 1180M654 1180L632 1186M654 1200L628 1202 608 1216M662 1170L680 1180M986 1160L984 1130 994 1084M984 1136L964 1148M990 1120L1006 1128M1066 1176L1080 1164M868 1132L912 1136 944 1132M340 990L348 968M700 1060L694 1040M745 1060L756 1028M820 1084L806 1070M640 1072L628 1056M612 1064L596 1058";
const GULF_LAND = "M640 1100L648 1088 660 1092 668 1102 658 1112 646 1108ZM668 1124L680 1112 694 1116 690 1132 680 1146 676 1180 668 1160ZM676 1180L686 1176 688 1206 678 1224H672ZM742 1224L736 1206 752 1190 772 1178 770 1194 756 1208ZM706 1200L722 1186 716 1198ZM612 1068L626 1056 640 1070 632 1084 616 1084ZM700 1098L712 1088 720 1100 710 1110ZM194 1190L206 1170 212 1176 198 1204 186 1208ZM382 1018L392 1006 388 1020ZM800 1150L820 1140 838 1134 852 1140 826 1160 806 1170ZM640 1190L650 1186 650 1206 640 1210ZM1068 1180L1084 1192 1072 1210Z";
const GULF_MARKS = "M882 1146H900M916 1154L930 1162M944 1168H972M984 1170L1028 1166M1068 1186L1070 1216M78 1222h10M1078 1218L1090 1202";
const RAIL = "M652 174L628 168 600 156 576 150 557 132 545 134 530 152 510 166 480 176 466 192 452 212 452 228 458 248 452 276 441 306 452 326 460 346 464 370 478 396 490 420 494 446 498 464 494 484 472 506 458 528 440 549 428 576 420 603 426 624 418 648 390 678 382 706 380 740 386 782 394 812 392 856 402 888 430 910 458 910 490 914 488 932 466 940 448 962 430 988 422 1004 432 1034 462 1052 490 1060 508 1058 530 1084 524 1106 526 1130 516 1142 498 1148 490 1176 494 1200 496 1224";
const STOPS: [number, number][] = [
  [558, 134], [568, 147], [578, 150], [585, 155], [585, 147], [598, 152], [620, 164], [630, 169], [645, 174], [480, 177], [453, 211], [453, 227], [449, 275], [456, 282], [441, 306],
  [468, 372], [472, 379], [478, 386], [478, 397], [484, 408], [489, 419], [471, 505], [459, 527], [441, 549], [420, 603], [390, 678], [384, 743], [387, 782], [393, 812],
  [393, 857], [396, 875], [402, 887], [428, 906], [432, 911], [450, 912], [465, 911], [476, 914], [488, 918], [484, 936], [477, 938], [440, 981], [431, 989],
  [506, 1059], [517, 1068], [524, 1074], [530, 1083], [544, 1090], [553, 1092], [498, 1149], [490, 1175], [494, 1195], [496, 1212],
];

@customElement("map-canvas")
class MapCanvas extends LitElement {
  static styles = css`
    :host { display: block; min-height: 0; background: #c58886; overflow: hidden; }
    svg { display: block; width: 100%; height: 100%; }
    .water { fill: #fff; stroke: #2d2d2d; stroke-width: 3.5; stroke-linejoin: round; }
    .land { fill: #c58886; stroke: #2d2d2d; stroke-width: 3.5; }
    .rim { fill: none; stroke: #2d2d2d; stroke-width: 11; stroke-linejoin: round; }
    .arm { fill: none; stroke: #fff; stroke-width: 5; stroke-linejoin: round; }
    .flow { fill: #fff; }
    .mark { fill: none; stroke: #2d2d2d; stroke-width: 4; }
    .stop { fill: #a9694b; stroke: #2a211d; stroke-width: 3.5; }
    .rail { fill: none; stroke: #7fae68; stroke-width: 3; }
    .pick { stroke: #f4e020; stroke-width: 3; }
  `;
  render() {
    return html`<svg viewBox="0 0 1280 464" preserveAspectRatio="xMinYMin slice" role="img" aria-label="Map">
      <g transform="translate(-5 -4) scale(.33333)">
        <path class="rim" d=${WEST_ARMS} /><path class="water" d=${WEST} /><path class="water" d=${WEST_WATER} />
        <path class="arm" d=${WEST_ARMS} /><path class="land" d=${WEST_LAND} /><path class="mark" d=${WEST_MARKS} />
        <path class="flow" d="M0 0H17V1273H0Z" />
      </g>
      <g transform="translate(455 56) scale(.33333)">
        <path class="water" d="M1185 -172L1218 0 1257 190 1400 500 2600 1224V-172Z" />
        <path class="rim" d=${GULF_ARMS} /><path class="water" d=${GULF} /><path class="arm" d=${GULF_ARMS} />
        <path class="flow" d="M1240 1164H2600V1224H1240Z" />
        <path class="land" d=${GULF_LAND} /><path class="mark" d=${GULF_MARKS} />
        ${STOPS.map(([x, y]) => svg`<circle class="stop" cx=${x} cy=${y} r="11" />`)}
        <path class="rail" d=${RAIL} /><path class="pick" d="M544 1088L558 1092" />
      </g>
    </svg>`;
  }
}

/* -------------------------------------------------------- attribute table */

const COLUMNS = ["cat", "EXSDESC", "F_CODE", "F_CODEDESC", "FCODESC", "cat_2", "EXSDESC_2", "F_CODE_2", "F_CODEDESC_2", "FCODESC_2"];
const PAIRS: [number, number, number][] = [
  [155, 78, 79], [156, 79, 78], [157, 79, 80], [158, 80, 79], [159, 80, 81], [160, 81, 80], [161, 81, 82], [162, 82, 81], [163, 82, 83], [164, 83, 82],
];

@customElement("attribute-table")
class AttributeTable extends LitElement {
  static styles = [shared, css`
    :host { display: flex; height: 310px; background: #2a2e32; border-top: 1px solid #24282b; border-bottom: 1px solid #202427; }
    .view { flex: 1; min-width: 0; overflow: hidden; }
    table { border-collapse: separate; border-spacing: 0; table-layout: fixed; width: 1028px; }
    .idx { width: 28px; }
    .num { width: 100px; }
    th { font-weight: 400; text-align: center; padding: 0; background: linear-gradient(#5b6268, #4f565b); border-right: 1px solid #757b80; border-bottom: 1px solid #202427; white-space: nowrap; overflow: hidden; }
    thead th { position: sticky; top: 0; height: 22px; }
    tbody th { border-top: 1px solid #6a7074; border-right-color: #24282b; }
    td { height: 30px; padding: 0 3px; border-right: 1px solid #24282b; border-bottom: 1px solid #24282b; background: #2a2e32; }
    tr:nth-child(even) td { background: #31353a; }
    .r { text-align: right; }
  `];
  firstUpdated() {
    const view = this.renderRoot.querySelector(".view")!;
    view.scrollTop = view.scrollHeight;
  }
  render() {
    return html`<div class="view"><table>
        <thead><tr><th class="idx"></th>${COLUMNS.map((c) => html`<th class="num">${c}</th>`)}</tr></thead>
        <tbody>${PAIRS.map(([n, a, b]) => html`<tr><th>${n}</th>${[a, b].map((v) => html`<td class="r">${v}.000</td><td>Operational</td><td>AN010</td><td>Railroad</td><td>Single</td>`)}</tr>`)}</tbody>
      </table></div>${scrollbar(255, 27, 0)}`;
  }
}

/* ----------------------------------------------------------------- dialog */

@customElement("intersections-dialog")
class IntersectionsDialog extends LitElement {
  static styles = [shared, css`
    :host { display: flex; flex-direction: column; background: #31363a; border-radius: 16px; box-shadow: 0 3px 14px rgba(0, 0, 0, 0.6); padding: 0 15px 17px 16px; }
    .head { display: grid; grid-template-columns: auto 1fr auto; align-items: center; height: 36px; flex: none; color: #f2f3f4; text-align: center; }
    .left { display: flex; gap: 7px; margin-left: -9px; align-items: center; }
    .win { display: flex; gap: 9px; margin-right: -5px; }
    .win button { width: 17px; }
    .body { flex: 1; min-height: 0; display: flex; padding: 11px 0 30px; }
    .main { flex: 1; min-width: 0; display: flex; flex-direction: column; padding: 1px 0 2px; }
    .tabs { display: flex; gap: 1px; align-items: flex-end; height: 28px; flex: none; }
    .tab { height: 26px; padding: 0 11px; background: #454b50; border: 1px solid #6c7276; border-bottom: 0; border-radius: 2px 2px 0 0; }
    .tab.cur { height: 28px; padding: 0 10px; background: #5a6168; }
    .pane { flex: 1; min-height: 0; display: flex; border: 1px solid #6c7276; border-right: 0; border-bottom-color: #202427; }
    .form { flex: 1; min-width: 0; overflow: hidden; display: flex; flex-direction: column; gap: 6px; padding: 4px 6px 0 4px; }
    .form > * { flex: none; }
    .lbl { height: 18px; white-space: nowrap; }
    .row { display: flex; align-items: center; gap: 7px; }
    .row.layer { gap: 11px; padding-left: 1px; height: 24px; }
    .layer .push { height: 24px; }
    .row .grow { flex: 1; }
    .pair { display: flex; gap: 14px; }
    .more { width: 23px; position: relative; }
    .more .tri { position: absolute; right: 1px; bottom: 0; width: 6px; height: 6px; }
    .tick { display: flex; align-items: center; gap: 5px; height: 18px; margin: 3px 0 4px; }
    .adv { display: flex; align-items: center; gap: 9px; font-weight: 700; margin: 1px 0 -3px 2px; text-align: left; justify-content: flex-start; height: 18px; }
    .group { border: 1px solid #3d4246; border-radius: 2px; padding: 10px; display: flex; flex-direction: column; gap: 6px; margin: 0 0 1px 1px; }
    .dim::placeholder { color: #656a6d; }
    .gutter { width: 17px; display: flex; flex-direction: column; align-items: center; flex: none; }
    .gutter .tri { margin: 1px 2px 0 0; width: 8px; height: 8px; }
    .dots { margin: auto 0; width: 2px; height: 17px; margin-right: -3px; background: repeating-linear-gradient(#8b8f92 0 2px, transparent 2px 3px); }
    .help { width: 138px; flex: none; background: #2a2e32; border: 1px solid #24282b; color: #63686b; padding: 5px 4px; }
    .help h2 { margin: 0 0 12px; font-size: 20px; line-height: 27px; overflow-wrap: anywhere; color: #565a5d; }
    .help p { margin: 0; }
    .foot { display: flex; gap: 8px; flex: none; padding-right: 1px; }
    .foot + .foot { margin-top: 6px; }
    .bar { flex: 1; height: 26px; background: #2a2e32; border: 1px solid #202427; border-radius: 2px; text-align: center; line-height: 24px; }
    .w78 { width: 78px; }
    .w80 { width: 80px; }
    .batch { width: 166px; }
    .fill { flex: 1; }
    .run { border-color: #8a4f88; background: linear-gradient(#67616d, #595460); }
    u { text-underline-offset: 3px; }
  `];

  private more(menu: boolean, label: string) {
    return html`<button class="push more" aria-label=${label}>...${menu ? triangle("down") : nothing}</button>`;
  }
  private layer(id: string, label: string) {
    return html`<label class="lbl" for=${id}>${label}</label>
      <div class="row layer">
        <div class="combo iconed grow"><select id=${id}><option>railroads [EPSG:2964]</option></select><span class="lead">${icon("Lines", 16)}</span>${triangle("down")}</div>
        <div class="pair"><button aria-label="Iterate">${icon("Sync", 22)}</button><button aria-label="Advanced options">${icon("Wrench", 24)}</button></div>
        ${this.more(true, "Browse " + label)}
      </div>
      <label class="tick"><input class="check" type="checkbox" />Selected features only</label>`;
  }
  private fields(id: string, label: string) {
    return html`<label class="lbl" for=${id}>${label}</label>
      <div class="row"><input class="field grow dim" id=${id} placeholder="0 options selected" readonly />${this.more(false, "Choose fields")}</div>`;
  }
  render() {
    return html`
      <div class="head">
        <span class="left">${icon("Logo", 22)}${icon("Dots", 17)}</span>
        <span>Line Intersections &lt;2&gt;</span>
        <span class="win"><button aria-label="Minimize">${icon("Minimize", 17)}</button><button aria-label="Maximize">${icon("Maximize", 17)}</button><button aria-label="Close window">${icon("CloseWin", 17)}</button></span>
      </div>
      <div class="body">
        <div class="main">
          <div class="tabs"><button class="tab cur">Parameters</button><button class="tab">Log</button></div>
          <div class="pane">
            <div class="form">
              ${this.layer("in", "Input layer")} ${this.layer("over", "Intersect layer")}
              ${this.fields("f1", "Input fields to keep (leave empty to keep all fields) [optional]")}
              ${this.fields("f2", "Intersect fields to keep (leave empty to keep all fields) [optional]")}
              <button class="adv"><svg width="12" height="8" viewBox="0 0 12 8"><path d="M1 1h10L6 7z" fill="#3a3f43" stroke="#111" stroke-width="1.200" /></svg>Advanced Parameters</button>
              <div class="group"><label class="lbl" for="prefix">Intersect fields prefix [optional]</label><input class="field" id="prefix" /></div>
              <label class="lbl" for="out">Intersections</label>
              <div class="row"><input class="field grow" id="out" placeholder="[Create temporary layer]" />${this.more(true, "Choose output")}</div>
              <label class="tick"><input class="check" type="checkbox" checked />Open output file after running algorithm</label>
            </div>
            ${scrollbar(0, 400, 20)}
          </div>
        </div>
        <div class="gutter">${triangle("right")}<span class="dots"></span></div>
        <div class="help"><h2>Line intersections</h2><p>This algorithm creates point features where the lines in the Intersect layer intersect the lines in the Input layer.</p></div>
      </div>
      <div class="foot"><div class="bar" role="progressbar" aria-valuenow="0">0%</div><button class="push w78" disabled>Cancel</button></div>
      <div class="foot">
        <button class="push w78">${icon("HelpRing", 12)}<span><u>H</u>elp</span></button>
        <button class="push batch">Run as Batch Process...</button><span class="fill"></span>
        <button class="push w80 run">${icon("Tick", 13)}Run</button>
        <button class="push w78">${icon("Cross", 12)}<span><u>C</u>lose</span></button>
      </div>`;
  }
}

/* ------------------------------------------------------------------- data */

const MENUS = ["Project", "Edit", "View", "Layer", "Settings", "Plugins", "Vector", "Raster", "Database", "Web", "Mesh", "Processing", "Help"];

const BARS = [
  ["H", "New", "Open", "Save", "New layout", "Layout manager", "Styles", "H", "Pan", "Pan to selection", "Zoom in", "Zoom out", "Zoom full", "Zoom to selection", "Zoom to layer", "~Zoom native", "Zoom last", "~Zoom next", "New map view", "New 3D view", "New bookmark", "Bookmarks", "Temporal", "Refresh", "H", "Identify", "Calculator", "*Toolbox", "Statistics", "Attribute table>", "Measure>", "Map tips", "~Run action>"],
  ["H", "Data source", "New GeoPackage", "New shapefile", "New SpatiaLite", "New memory layer", "New mesh", "|", "New virtual layer", "|", "H", "Current edits", "Toggle editing", "~Save edits", "~Add feature", "~Vertex tool>", "~Modify attributes", "~Delete selected", "~Cut", "Copy", "~Paste", "~Undo", "~Redo", "H", "Labels", "Diagrams", "|", "Highlight pinned", "Show unplaced", "|", "~Pin labels", "~Show labels", "~Move label", "~Rotate label", "~Change label", "H", "MetaSearch", "H", "Python", "H"],
  ["H", "*Select features>", "Select by value>", "Deselect all>", "Select by location", "H", "~Mesh digitizing", "~Mesh select>", "~Mesh transform", "~Mesh edges>", "H", "Annotation layer>", "Modify annotations", "Polygon annotation", "Line annotation", "Marker annotation", "Text annotation", "|", "Text balloon>"],
];

const ATTR_BAR = ["Toggle editing", "~Modify attributes", "~Save edits", "|", "~New row", "~Delete selected", "~Cut", "Copy", "~Paste", "|", "Conditional select", "Select all", "Invert", "Deselect", "Filter", "Move to top", "Pan to selection", "Zoom to selection", "|", "~New field", "~Delete field", "Organize columns", "Calculator", "|", "Conditional formatting", "|", "*Dock", "Actions"];

const BROWSER: [string, string, boolean][] = [
  ["Favorites", "Favorites", false], ["Bookmarks", "Spatial Bookmarks", true], ["Project Home", "Project Home", true], ["Home", "Home", true],
  ["Folder", "/", true], ["GeoPackage", "GeoPackage", false], ["SpatiaLite", "SpatiaLite", false], ["PostGIS", "PostGIS", true],
];

interface Layer { name: string; kind: "group" | "point" | "line" | "fill" | "edit"; color?: string; arrow?: "right" | "down"; on?: boolean; sub?: boolean; sel?: boolean; temp?: boolean; }
const LAYERS: Layer[] = [
  { name: "zad8", kind: "group", arrow: "right" },
  { name: "airports", kind: "point", color: "#e2663c" },
  { name: "zad5", kind: "group", arrow: "right" },
  { name: "popp", kind: "point", color: "#e2b032" },
  { name: "storagep", kind: "point", color: "#bdb094" },
  { name: "majrivers", kind: "line", color: "#5f8560" },
  { name: "pipelines", kind: "line", color: "#97413f" },
  { name: "railroads", kind: "line", color: "#85846d", on: true, sel: true },
  { name: "Buffered", kind: "fill", color: "#74a072", temp: true },
  { name: "rivers", kind: "line", color: "#1b1ba8" },
  { name: "trails", kind: "line", color: "#d08a20" },
  { name: "builtups", kind: "fill", color: "#a87359" },
  { name: "grassland", kind: "fill", color: "#ea7290" },
  { name: "lakes", kind: "fill", color: "#bfd14f" },
  { name: "landice", kind: "fill", color: "#93522d" },
  { name: "zad3", kind: "fill", color: "#7b8a8f", temp: true },
  { name: "swamp", kind: "fill", color: "#d6b43c" },
  { name: "zad2", kind: "group", arrow: "down" },
  { name: "trees_mixed", kind: "fill", color: "#93522d", on: true, sub: true },
  { name: "trees_evergreen", kind: "fill", color: "#beb297", on: true, sub: true },
  { name: "trees_deciduous", kind: "fill", color: "#e6b637", on: true, sub: true },
  { name: "trees", kind: "edit", arrow: "right" },
  { name: "tundra", kind: "fill", color: "#225208" },
  { name: "regions", kind: "fill", color: "#8f5c9c" },
  { name: "Intersections", kind: "point", color: "#a76a4e", on: true, temp: true },
  { name: "alaska", kind: "fill", color: "#c58886", on: true },
];

const IDENTIFY: [number, "" | "right" | "down", string, string][] = [
  [1, "down", "EXSDESC", "Operational"], [2, "right", "(Derived)", ""], [2, "right", "(Actions)", ""], [2, "", "cat", "11.000"], [2, "", "EXSDESC", "Operational"],
  [2, "", "F_CODE", "AN010"], [2, "", "F_CODEDESC", "Railroad"], [2, "", "FCODESC", "Single"], [2, "", "cat_2", "13.000"], [2, "", "EXSDESC_2", "Operational"],
  [2, "", "F_CODE_2", "AN010"], [2, "", "F_CODEDESC_2", "Railroad"], [2, "", "FCODESC_2", "Single"], [1, "right", "EXSDESC", "Operational"],
];

/* --------------------------------------------------------------- app root */

@customElement("app-root")
class AppRoot extends LitElement {
  static styles = [shared, css`
    :host { display: flex; flex-direction: column; height: 100vh; overflow: hidden; background: #31363a; position: relative; }

    .panel { display: flex; align-items: center; height: 32px; padding: 0 0 2px 5px; border-bottom: 1px solid #272b2e; flex: none; }
    .pill { display: flex; justify-content: space-around; align-items: center; width: 126px; height: 20px; padding: 0 8px 0 14px; border-radius: 5px; background: #101113; }
    .menus { display: flex; gap: 13px; padding-left: 11px; flex: 1; }
    .tray { display: flex; align-items: center; gap: 8px; font-size: 14px; }
    .tray .tri { fill: #e8e8e8; margin: 0 3px; }
    .clock { display: flex; gap: 8px; }

    .title { display: grid; grid-template-columns: auto 1fr auto; align-items: center; height: 34px; padding: 0 10px 2px 7px; color: #9ea2a5; flex: none; text-align: center; }
    .lead2 { display: flex; align-items: center; gap: 7px; }
    .win { display: flex; justify-content: flex-end; gap: 9px; }

    .bars { flex: none; border-bottom: 1px solid #7b7f82; margin-bottom: 1px; }
    .barrow { display: flex; align-items: center; height: 39px; padding-bottom: 2px; border-top: 1px solid #7b7f82; box-shadow: inset 0 -1px #24282b; }
    .barrow:last-child { height: 38px; }
    .tool { width: 33px; height: 30px; border: 1px solid transparent; border-radius: 3px; flex: none; }
    .tool.on { background: #4c5258; border-color: #6a7075; }
    .off .ico, .off .tri { opacity: 0.34; filter: grayscale(0.7); }
    .drop { width: 12px; height: 30px; flex: none; }
    .drop.boxed { background: #43494e; border: 1px solid #6a7075; border-radius: 3px; }
    .drop .tri { width: 8px; height: 8px; }
    .handle { width: 6px; height: 20px; margin: 0 3px 0 7px; flex: none; background: repeating-linear-gradient(transparent 0 2px, #31363a 2px 3px), repeating-linear-gradient(90deg, #74787b 0 2px, transparent 2px 3px); }
    .barrow .handle:first-child { margin-left: 4px; }
    .sep { width: 7px; height: 20px; flex: none; background: linear-gradient(90deg, transparent 4px, #272b2e 4px 5px, transparent 5px); }

    .work { flex: 1; min-height: 0; display: grid; grid-template-columns: 238px 7px minmax(0, 1fr) 7px 388px; }
    .dock { display: flex; flex-direction: column; min-height: 0; min-width: 0; }
    .vsplit { align-self: center; width: 2px; height: 17px; margin-left: 3px; background: repeating-linear-gradient(#8b8f92 0 2px, transparent 2px 3px); }
    .hsplit { width: 17px; height: 2px; margin: 3px auto 2px; flex: none; background: repeating-linear-gradient(90deg, #8b8f92 0 2px, transparent 2px 3px); }
    .docktitle { display: flex; gap: 2px; align-items: center; height: 18px; padding: 0 1px 0 4px; flex: none; }
    .docktitle span { flex: 1; }
    .docktitle .mini { width: 12px; height: 12px; }
    .smallbar { display: flex; align-items: center; height: 25px; padding-left: 3px; flex: none; }
    .smallbar .tool { width: 25px; height: 23px; }
    .smallbar .drop { width: 11px; height: 23px; }
    .smallbar .drop .tri { width: 9px; height: 9px; }
    .gap4 { padding-top: 1px; height: 33px; }

    .tree { display: flex; background: #2a2e32; border: 1px solid #24282b; min-height: 0; }
    .rows { flex: 1; min-width: 0; list-style: none; margin: -1px 0 0; padding: 0; overflow: hidden; }
    .node { display: flex; align-items: center; height: 20px; white-space: nowrap; }
    .tw { width: 10px; display: flex; justify-content: center; flex: none; }
    .tw .tri { width: 9px; height: 9px; }
    .brow { padding-left: 2px; }
    .brow .ico { margin: 0 6px 0 7px; }
    .browsertree { height: 162px; flex: none; }
    .layertree { flex: 1; }
    .lrow { padding-left: 4px; color: #8b8f91; font-weight: 700; font-style: italic; padding-right: 7px; }
    .lrow.grp { color: #e4e6e7; font-weight: 400; font-style: normal; }
    .lrow.vis { color: #eceeef; font-style: normal; }
    .lrow.sub { padding-left: 24px; }
    .lrow.sel { background: #5a3556; }
    .lrow.sel .txt { text-decoration: underline; text-underline-offset: 3px; }
    .lrow .check { margin: 0 6px 0 9px; }
    .lrow.sub .check { opacity: 0.6; }
    .sym { width: 16px; height: 16px; margin-right: 6px; flex: none; display: grid; place-items: center; }
    .sym.line { width: 14px; }
    .txt { flex: 1; }
    .chip { width: 16px; height: 16px; background: #303539; display: grid; place-items: center; }
    .chip::after { content: ""; width: 9px; height: 5px; border: 1px solid #24282b; border-right: 0; }

    .attr { display: flex; flex-direction: column; flex: none; }
    .attrtitle { height: 20px; line-height: 20px; padding-left: 6px; }
    .attrbar { height: 31px; padding-bottom: 1px; }
    .viewrow { display: flex; align-items: center; gap: 2px; height: 32px; padding: 1px 3px 0 3px; }
    .showall { width: 140px; height: 24px; gap: 3px; }
    .showall .tri { width: 6px; height: 6px; align-self: flex-end; }
    .fill { flex: 1; }
    .vb { width: 22px; height: 22px; border: 1px solid transparent; border-radius: 3px; }
    .vb.on { background: #454b50; border-color: #6a7075; }

    .finder { display: flex; align-items: center; justify-content: flex-end; height: 26px; margin-top: 32px; padding-right: 8px; background: #2a2e32; border: 1px solid #202427; flex: none; }
    .algs { height: 73px; flex: none; }
    .pickrow { height: 20px; margin-top: 40px; background: #5a3556; }
    .empty { flex: 1; background: #2a2e32; border: 1px solid #24282b; }
    .idtree { height: 293px; margin-top: 33px; flex: none; }
    .idview { flex: 1; min-width: 0; overflow: hidden; }
    .ids { width: 100%; table-layout: fixed; border-collapse: collapse; }
    .ids th { height: 22px; padding: 0 3px; font-weight: 400; text-align: left; background: linear-gradient(#5b6268, #4f565b); border-right: 1px solid #757b80; }
    .ids .first { width: 100px; }
    .ids td { height: 18px; padding: 0 1px 0 3px; white-space: nowrap; overflow: hidden; text-overflow: ellipsis; }
    .ids tr:nth-child(even) td { background: #31353a; }
    .ids td .tri { display: inline-block; width: 8px; height: 8px; margin-right: 5px; }
    .ids td.l0 { font-weight: 700; padding-left: 2px; }
    .ids td.l1 { padding-left: 14px; }
    .ids td.l2 { padding-left: 26px; }
    .ids td.leaf { padding-left: 39px; }
    .opt { display: flex; align-items: center; gap: 8px; margin: 7px 6px 0 5px; flex: none; }
    .opt.last { margin-bottom: 7px; margin-top: 8px; color: #7c8185; }
    .wide { flex: 1; }
    .w77 { width: 77px; }

    .status { display: flex; align-items: center; height: 32px; padding: 0 6px 0 4px; font-size: 11px; flex: none; }
    .locate { display: flex; align-items: center; width: 235px; height: 26px; gap: 8px; padding: 0 8px; background: #2a2e32; border: 1px solid #202427; border-radius: 3px; font-size: 13px; }
    .locate input { flex: 1; min-width: 0; background: none; border: 0; outline: none; padding: 0; }
    .locate input::placeholder { color: #7d8184; opacity: 1; }
    .status .field { height: 24px; }
    .coord { width: 102px; margin: 0 4px; }
    .icb { margin: 0 11px 0 1px; }
    .icb.lock { margin-right: 9px; }
    .scale { display: flex; width: 86px; margin: 0 11px 0 4px; }
    .scale .field { flex: 1; }
    .stepdown { width: 20px; height: 24px; background: #555c62; border: 1px solid #757b80; }
    .stepdown .tri { width: 8px; height: 8px; }
    .spin { display: flex; width: 88px; margin-left: 4px; }
    .spin .field { flex: 1; }
    .spin.rot { margin-left: 8px; }
    .rotlabel { margin-left: 11px; }
    .steps { width: 13px; height: 24px; background: #555c62; border: 1px solid #757b80; display: grid; place-items: center; }
    .steps .tri { width: 7px; height: 7px; }
    .rend { display: flex; align-items: center; gap: 6px; margin-left: 9px; }
    .crs { gap: 3px; margin: 0 24px 0 15px; }
    .dialog { position: absolute; right: 73px; top: 58px; width: 728px; height: 643px; }
  `];

  private layerRow(l: Layer) {
    const c = l.color ?? "";
    const sym =
      l.kind === "group" ? icon("Group", 16)
      : l.kind === "edit" ? icon("Trees", 16)
      : l.kind === "point" ? html`<svg width="16" height="16"><circle cx="8" cy="8" r="2.8" fill=${c} /></svg>`
      : l.kind === "line" ? html`<svg width="14" height="16"><path d="M0 8h14" stroke=${c} stroke-width="2" /></svg>`
      : html`<svg width="16" height="16"><rect x=".5" y=".5" width="15" height="15" fill=${c} stroke="#000" stroke-opacity=".4" /></svg>`;
    const cls = { node: true, lrow: true, grp: l.kind === "group", vis: !!l.on && !l.sub, sub: !!l.sub, sel: !!l.sel };
    return html`<li class=${classMap(cls)}>
      <span class="tw">${l.arrow ? triangle(l.arrow) : nothing}</span><input class="check" type="checkbox" aria-label=${l.name} ?checked=${l.on} />
      <span class=${classMap({ sym: true, line: l.kind === "line" })}>${sym}</span><span class="txt">${l.name}</span>${l.temp ? html`<span class="chip"></span>` : nothing}
    </li>`;
  }

  render() {
    return html`
      <header class="panel">
        <div class="pill">${icon("Apps", 14)}${icon("Desktop", 14)}${icon("Tiling", 14)}</div>
        <nav class="menus">${MENUS.map((m) => html`<button>${m}</button>`)}</nav>
        <div class="tray">${["Bell", "Feathers", "Pause", "Clipboard", "Volume", "Wifi"].map((n) => icon(n, 14))}${triangle("down")}<span class="clock"><span>07.11.2021</span><span>14:46</span></span></div>
      </header>
      <div class="title">
        <span class="lead2">${icon("Logo", 22)}${icon("Dots", 16)}</span><span>*lab4 — QGIS</span>
        <span class="win"><button aria-label="Minimize">${icon("Minimize", 17)}</button><button aria-label="Maximize">${icon("Maximize", 17)}</button><button aria-label="Close">${icon("CloseWin", 17)}</button></span>
      </div>
      <div class="bars">${BARS.map((b) => html`<div class="barrow">${toolbar(b, 24)}</div>`)}</div>

      <main class="work">
        <aside class="dock">
          ${dockTitle("Browser")}
          <div class="smallbar gap4">${toolbar(["Add layer", "Refresh", "Filter", "Collapse all", "Properties"], 16)}</div>
          <div class="tree browsertree">
            <ul class="rows">${BROWSER.map(([i, t, a]) => html`<li class="node brow"><span class="tw">${a ? triangle("right") : nothing}</span>${icon(i, 16)}<span>${t}</span></li>`)}</ul>
            ${scrollbar(0, 66, 66)}
          </div>
          <span class="hsplit"></span>
          ${dockTitle("Layers")}
          <div class="smallbar gap4">${toolbar(["Layer styling", "Add group", "Visibility", "Filter", "Expression>", "Expand all", "Collapse all", "Remove layer"], 16)}</div>
          <div class="tree layertree"><ul class="rows">${LAYERS.map((l) => this.layerRow(l))}</ul></div>
        </aside>
        <span class="vsplit"></span>
        <section class="dock">
          <map-canvas style="flex:1"></map-canvas>
          <span class="hsplit"></span>
          <div class="attr">
            <div class="attrtitle">Intersections — Features Total: 164, Filtered: 164, Selected: 1</div>
            <div class="smallbar attrbar">${toolbar(ATTR_BAR, 16)}</div>
            <attribute-table></attribute-table>
            <div class="viewrow">
              <button class="push showall">${icon("Attribute table", 16)}Show All Features${triangle("down")}</button><span class="fill"></span>
              <button class="vb" aria-label="Form view">${icon("Form view", 14)}</button><button class="vb on" aria-label="Table view">${icon("Attribute table", 16)}</button>
            </div>
          </div>
        </section>
        <span></span>
        <aside class="dock">
          ${dockTitle("")}
          <div class="finder">${icon("Clear", 13)}</div>
          <div class="tree algs"><div class="rows"><div class="pickrow"></div></div>${scrollbar(17, 27, 0)}</div>
          <span class="hsplit"></span>
          ${dockTitle("")}
          <div class="empty"></div>
          <span class="hsplit"></span>
          ${dockTitle("")}
          <div class="tree idtree">
            <div class="idview"><table class="ids">
              <thead><tr><th class="first">Feature</th><th>Value</th></tr></thead>
              <tbody>
                <tr><td class="l0" colspan="2">${triangle("down")}Intersections&nbsp; [2]</td></tr>
                ${IDENTIFY.map(([lv, a, k, v]) => html`<tr><td class=${classMap({ l1: lv === 1, l2: lv === 2, leaf: !a })}>${a ? triangle(a) : nothing}${k}</td><td>${v}</td></tr>`)}
              </tbody>
            </table></div>
            ${scrollbar(0, 246, 18)}
          </div>
          <div class="opt"><label for="mode">Mode</label><div class="combo wide"><select id="mode"><option>Current Layer</option></select>${triangle("down")}</div></div>
          <div class="opt last"><label for="view">View</label><div class="combo w77"><select id="view" disabled><option>Tree</option></select>${triangle("down")}</div></div>
        </aside>
      </main>

      <footer class="status">
        <label class="locate">${icon("Search", 14)}<input placeholder="Type to locate (Ctrl+K)" aria-label="Type to locate" /></label>
        <span class="fill"></span>
        <label for="coord">Coordinate</label><input class="field coord" id="coord" value="-229135,3767990" />
        <button class="icb" aria-label="Extents">${icon("Extents", 16)}</button>
        <label for="scale">Scale</label><span class="scale"><input class="field" id="scale" value="1:5519560" /><button class="stepdown" aria-label="Scales">${triangle("down")}</button></span>
        <button class="icb lock" aria-label="Lock scale">${icon("Lock", 14)}</button>
        <label for="mag">Magnifier</label><span class="spin"><input class="field" id="mag" value="100%" /><span class="steps">${triangle("up")}${triangle("down")}</span></span>
        <label class="rotlabel" for="rot">Rotation</label><span class="spin rot"><input class="field" id="rot" value="0.0 °" /><span class="steps">${triangle("up")}${triangle("down")}</span></span>
        <label class="rend"><input class="check" type="checkbox" checked />Render</label>
        <button class="crs">${icon("Globe", 14)}EPSG:2964</button>
        <button aria-label="Messages">${icon("Messages", 17)}</button>
      </footer>

      <intersections-dialog class="dialog"></intersections-dialog>`;
  }
}
